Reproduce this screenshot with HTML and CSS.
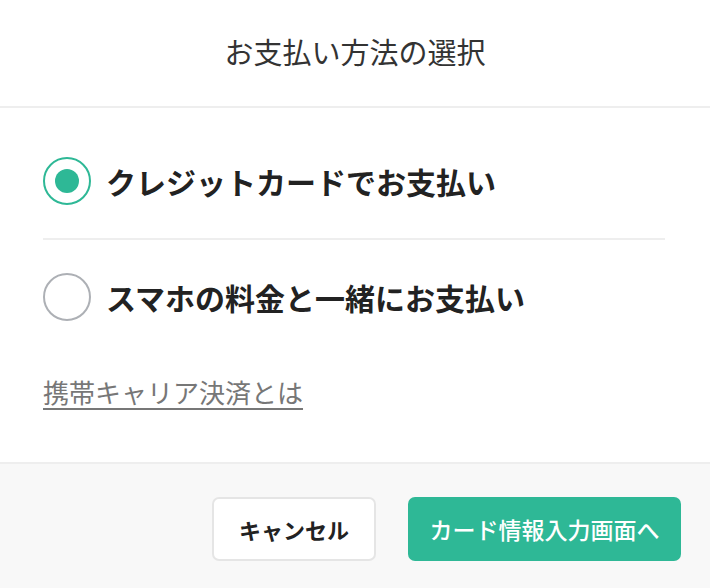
FILE: index.html
```html
<!DOCTYPE html>
<html lang="ja">
<head>
  <meta charset="UTF-8">
  <meta name="viewport" content="width=device-width, initial-scale=1">
  <title>お支払い方法の選択</title>
  <link rel="stylesheet" href="styles.css">
</head>
<body>

<div class="modal">
  <div class="modal-header">
    <h1>お支払い方法の選択</h1>
  </div>

  <div class="modal-body">
    <label class="option">
      <span class="radio checked"></span>
      <span class="option-label">クレジットカードでお支払い</span>
    </label>
    <label class="option">
      <span class="radio"></span>
      <span class="option-label">スマホの料金と一緒にお支払い</span>
    </label>
    <a href="#" class="help-link">携帯キャリア決済とは</a>
  </div>

  <div class="modal-footer">
    <button class="btn btn-cancel">キャンセル</button>
    <button class="btn btn-primary">カード情報入力画面へ</button>
  </div>
</div>

</body>
</html>
```

FILE: styles.css
```css
* {
  box-sizing: border-box;
}

body {
  margin: 0;
  font-family: "Noto Sans CJK JP", "Noto Sans", sans-serif;
  background: #fff;
  color: #222;
}

.modal-header {
  height: 108px;
  display: flex;
  align-items: center;
  justify-content: center;
  border-bottom: 2px solid #eee;
}

.modal-header h1 {
  margin: 0;
  font-size: 29px;
  font-weight: 400;
  color: #333;
  padding-bottom: 4px;
}

.modal-body {
  padding: 16px 45px 52px 43px;
}

.option {
  display: flex;
  align-items: center;
  gap: 15px;
  padding: 33px 0;
  cursor: pointer;
}

.option + .option {
  border-top: 2px solid #eee;
}

.radio {
  width: 48px;
  height: 48px;
  border-radius: 50%;
  border: 2px solid #adb0b5;
  display: flex;
  align-items: center;
  justify-content: center;
  flex-shrink: 0;
}

.radio.checked {
  border-color: #2eb896;
}

.radio.checked::after {
  content: "";
  width: 24px;
  height: 24px;
  border-radius: 50%;
  background: #2eb896;
}

.option-label {
  font-size: 30px;
  font-weight: 700;
  color: #222;
  line-height: 1;
}

.help-link {
  display: inline-block;
  margin-top: 19px;
  font-size: 26px;
  color: #777;
  text-decoration: underline;
  text-underline-offset: 5px;
  text-decoration-thickness: 2px;
}

.modal-footer {
  background: #f8f8f8;
  border-top: 2px solid #eee;
  display: flex;
  justify-content: flex-end;
  gap: 32px;
  padding: 33px 29px 27px;
}

.btn {
  height: 64px;
  border-radius: 7px;
  font-family: inherit;
  font-size: 22px;
  cursor: pointer;
}

.btn-cancel {
  width: 164px;
  background: #fff;
  border: 2px solid #e5e5e5;
  color: #222;
  font-weight: 700;
}

.btn-primary {
  width: 273px;
  background: #2eb896;
  border: none;
  color: #fff;
  font-size: 23px;
  font-weight: 500;
}
```
